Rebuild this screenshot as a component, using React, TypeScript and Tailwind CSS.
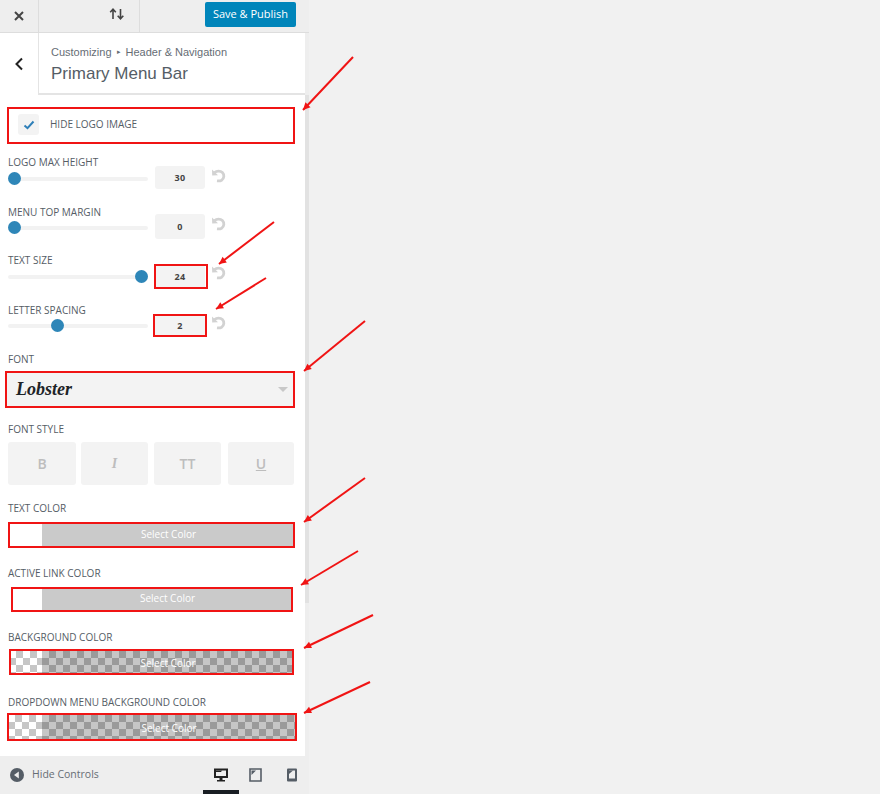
import React from "react";

const FONT = "font-['Open_Sans','Noto_Sans',sans-serif]";

function Label({ children, className = "" }: { children: React.ReactNode; className?: string }) {
  return <div className={`text-[10px] leading-[14px] uppercase text-[#555d66] ${className}`}>{children}</div>;
}

function Reset({ className }: { className: string }) {
  return (
    <svg width="15" height="15" viewBox="0 0 15 15" className={`ml-[6px] ${className}`} fill="none">
      <path d="M1 1.5 L1.2 7.6 L7 7.2 Z" fill="#d2d2d2" />
      <path d="M3.6 4.6 C5.6 2.8 9.4 2.6 11.4 4.6 C13.6 6.8 13.2 10.6 10.6 12.2 C9.2 13 7.6 13 6 12.8" stroke="#d2d2d2" strokeWidth="2.8" />
    </svg>
  );
}

function SliderRow({ label, value, pos, mt, rowMt, track, inputH, resetMt }: { label: string; value: string; pos: number; mt: string; rowMt: string; track: string; inputH: string; resetMt: string }) {
  return (
    <div className={`pl-2 ${mt}`}>
      <Label>{label}</Label>
      <div className={`flex items-start ${rowMt}`}>
        <div className={`relative w-[140px] h-[4px] ${track}`}>
          <div className="absolute left-0 right-0 top-0 h-[4px] rounded bg-[#f2f2f2]" />
          <div className="absolute top-[-5px] w-[13px] h-[13px] rounded-full bg-[#2e86b8]" style={{ left: pos }} />
        </div>
        <div className={`ml-[7px] w-[50px] ${inputH} rounded-[3px] bg-[#f3f3f3] flex items-center justify-center text-[9px] font-bold text-[#444] tracking-[0.4px]`}>
          {value}
        </div>
        <Reset className={resetMt} />
      </div>
    </div>
  );
}

function StyleBtn({ children, className }: { children: React.ReactNode; className: string }) {
  return <div className={`${className} h-[43px] rounded-[3px] bg-[#f3f3f3] flex items-center justify-center text-[14px] font-semibold text-[#bdbdbd]`}>{children}</div>;
}

const checker = {
  backgroundColor: "#c6c6c6",
  backgroundImage:
    "linear-gradient(45deg,#9a9a9a 25%,transparent 25%,transparent 75%,#9a9a9a 75%),linear-gradient(45deg,#9a9a9a 25%,transparent 25%,transparent 75%,#9a9a9a 75%)",
  backgroundSize: "14px 14px",
  backgroundPosition: "0 0,7px 7px",
};
const checkerLight = {
  backgroundColor: "#ffffff",
  backgroundImage:
    "linear-gradient(45deg,#c6c6c6 25%,transparent 25%,transparent 75%,#c6c6c6 75%),linear-gradient(45deg,#c6c6c6 25%,transparent 25%,transparent 75%,#c6c6c6 75%)",
  backgroundSize: "14px 14px",
  backgroundPosition: "0 0,7px 7px",
};

function ColorBtn({ transparent, className, swatch, text = "" }: { transparent?: boolean; className: string; swatch: string; text?: string }) {
  return (
    <div className={`flex ${className}`}>
      <div className={`${swatch} shrink-0 bg-white`} style={transparent ? checkerLight : undefined} />
      <div className={`flex-1 bg-[#cacaca] flex items-center justify-center text-[10px] text-white ${text}`} style={transparent ? checker : undefined}>
        Select Color
      </div>
    </div>
  );
}

function RedBox({ className }: { className: string }) {
  return <div className={`absolute border-2 border-[#f01414] pointer-events-none ${className}`} />;
}

const arrows: [number, number, number, number][] = [
  [353, 57, 303, 110],
  [274, 222, 219, 264],
  [266, 278, 216, 309],
  [365, 321, 304, 371],
  [365, 478, 304, 522],
  [358, 551, 301, 585],
  [373, 615, 304, 648],
  [370, 682, 304, 713],
];

function Arrows() {
  return (
    <svg className="absolute left-0 top-0 pointer-events-none" width="880" height="794">
      {arrows.map(([x1, y1, x2, y2], i) => {
        const a = Math.atan2(y2 - y1, x2 - x1);
        const L = 8;
        const p = (d: number) => `${x2 - L * Math.cos(a + d)},${y2 - L * Math.sin(a + d)}`;
        return (
          <g key={i}>
            <line x1={x1} y1={y1} x2={x2} y2={y2} stroke="#f01414" strokeWidth="2" />
            <polygon points={`${x2},${y2} ${p(0.45)} ${p(-0.45)}`} fill="#f01414" />
          </g>
        );
      })}
    </svg>
  );
}

export default function App() {
  return (
    <div className={`relative w-[880px] h-[794px] overflow-hidden bg-[#f1f1f1] ${FONT}`}>
      <div className="relative w-[309px] h-[794px] bg-[#eeeeee] flex flex-col">
        {/* top bar */}
        <div className="h-[33px] flex border-b border-[#dddddd] shrink-0">
          <div className="w-[39px] border-r border-[#dddddd] flex items-center justify-center">
            <svg width="12" height="12" viewBox="0 0 12 12" stroke="#444" strokeWidth="2"><path d="M2 2 L10 10 M10 2 L2 10" /></svg>
          </div>
          <div className="w-[101px] border-r border-[#dddddd] flex items-center justify-end pr-[14px] pb-[4px]">
            <svg width="16" height="12" viewBox="0 0 16 12" fill="none" stroke="#444" strokeWidth="1.6">
              <path d="M4 11 V1.5 M1.2 4.2 L4 1.2 L6.8 4.2" />
              <path d="M11.5 1 V10.5 M8.7 7.8 L11.5 10.8 L14.3 7.8" />
            </svg>
          </div>
          <div className="flex-1 flex justify-end pr-[13px] pt-[2px]">
            <div className="w-[91px] h-[25px] rounded-[2px] bg-[#0085ba] text-white text-[11px] font-medium flex items-center justify-center">Save &amp; Publish</div>
          </div>
        </div>

        {/* section header */}
        <div className="flex h-[62px] shrink-0 w-[305px] bg-white">
          <div className="w-[38px] flex items-center justify-center">
            <svg width="10" height="14" viewBox="0 0 10 14" fill="none" stroke="#222" strokeWidth="2"><path d="M8 1.5 L2.5 7 L8 12.5" /></svg>
          </div>
          <div className="flex-1 border-l border-b-2 border-[#e4e4e4] pl-[12px] pt-[11px] font-['Liberation_Sans',sans-serif]">
            <div className="text-[11px] leading-[16px] text-[#666d75] flex items-center">
              Customizing<span className="text-[7px] mx-[5px]">▸</span>Header &amp; Navigation
            </div>
            <div className="text-[17px] leading-[24px] text-[#555d66] mt-[2px]">Primary Menu Bar</div>
          </div>
        </div>

        {/* body */}
        <div className="flex-1 w-[305px] bg-white flex flex-col">
          <div className="flex items-center h-[29px] mt-[15px] pl-[18px] shrink-0">
            <div className="w-[21px] h-[21px] rounded-[3px] bg-[#f3f3f3] flex items-center justify-center">
              <svg width="12" height="10" viewBox="0 0 12 10" fill="none" stroke="#2e7fb8" strokeWidth="2"><path d="M1.5 5.5 L4.5 8.2 L10.5 1.5" /></svg>
            </div>
            <span className="ml-[11px] text-[10px] font-medium uppercase text-[#555d66]">Hide logo image</span>
          </div>

          <SliderRow label="Logo max height" value="30" pos={0} mt="mt-[16px]" rowMt="-mt-[3px]" track="mt-[11px]" inputH="h-[23px]" resetMt="mt-[2px]" />
          <SliderRow label="Menu top margin" value="0" pos={0} mt="mt-[16px]" rowMt="-mt-[5px]" track="mt-[12px]" inputH="h-[25px]" resetMt="mt-[2px]" />
          <SliderRow label="Text size" value="24" pos={127} mt="mt-[14px]" rowMt="-mt-[2px]" track="mt-[10px]" inputH="h-[24px]" resetMt="mt-0" />
          <SliderRow label="Letter spacing" value="2" pos={43} mt="mt-[14px]" rowMt="-mt-[2px]" track="mt-[9px]" inputH="h-[22px]" resetMt="mt-0" />

          <div className="mt-[15px]">
            <Label className="pl-2">Font</Label>
            <div className="mt-[6px] ml-[6px] w-[288px] h-[35px] bg-[#f3f3f3] flex items-center pl-[10px] pr-[6px]">
              <span className="text-[18px] italic font-bold text-[#1d2327] font-['Liberation_Serif',serif] flex-1">Lobster</span>
              <div className="w-0 h-0 border-x-[5px] border-x-transparent border-t-[5px] border-t-[#c8c8c8]" />
            </div>
          </div>

          <div className="pl-2 mt-[15px]">
            <Label>Font style</Label>
            <div className="flex mt-[6px]">
              <StyleBtn className="w-[68px]">B</StyleBtn>
              <StyleBtn className="w-[67px] ml-[5px]"><span className="italic font-['Liberation_Serif',serif] font-bold">I</span></StyleBtn>
              <StyleBtn className="w-[67px] ml-[6px]">TT</StyleBtn>
              <StyleBtn className="w-[66px] ml-[7px]"><span className="underline">U</span></StyleBtn>
            </div>
          </div>

          <div className="pl-2 mt-[16px]">
            <Label>Text color</Label>
            <ColorBtn swatch="w-[34px]" text="pb-[2px]" className="mt-[8px] h-[24px] w-[287px]" />
          </div>
          <div className="pl-2 mt-[19px]">
            <Label>Active link color</Label>
            <ColorBtn swatch="w-[30px]" text="pb-[3px]" className="mt-[8px] h-[24px] w-[281px] ml-[4px]" />
          </div>
          <div className="pl-2 mt-[18px]">
            <Label>Background color</Label>
            <ColorBtn transparent swatch="w-[33px]" className="mt-[7px] h-[24px] ml-[1px] w-[285px]" />
          </div>
          <div className="pl-2 mt-[20px]">
            <Label>Dropdown menu background color</Label>
            <ColorBtn transparent swatch="w-[34px]" text="pt-[1px]" className="mt-[6px] h-[25px] w-[288px]" />
          </div>
        </div>

        {/* footer */}
        <div className="h-[38px] shrink-0 flex items-center pl-[10px] relative">
          <svg width="14" height="14" viewBox="0 0 14 14"><circle cx="7" cy="7" r="7" fill="#555d66" /><path d="M8.8 3.6 V10.4 L4 7 Z" fill="#eeeeee" /></svg>
          <span className="ml-[8px] text-[10.5px] text-[#666d75]">Hide Controls</span>
          <div className="ml-auto flex mr-[12px] items-center">
            <svg width="14" height="14" viewBox="0 0 14 14"><path fillRule="evenodd" d="M0 0.5 H14 V10 H8.5 V12 H11 V13.5 H3 V12 H5.5 V10 H0 Z M2 2.5 V8 H12 V2.5 Z" fill="#222" /><path d="M2 2.5 H8 L7 4 H2 Z" fill="#222" /></svg>
            <svg width="13" height="14" viewBox="0 0 13 14" className="ml-[21px]"><path d="M1 1 H12 V13 H1 Z" fill="none" stroke="#555d66" strokeWidth="1.6" /><path d="M2.5 2.5 H7 L2.5 7 Z" fill="#555d66" /></svg>
            <svg width="10" height="14" viewBox="0 0 10 14" className="ml-[25px]"><rect x="0" y="0.5" width="10" height="13" rx="1" fill="#555d66" /><path d="M2 2.5 H8 V10.5 H2 Z" fill="#eeeeee" /><path d="M2 2.5 H6 L2 6 Z" fill="#555d66" /></svg>
          </div>
          <div className="absolute left-[203px] bottom-0 w-[36px] h-[4px] bg-[#191e23]" />
        </div>

        {/* scrollbar thumb */}
        <div className="absolute left-[305px] top-[95px] w-[4px] h-[508px] bg-[#e2e2e2]" />
      </div>

      <RedBox className="left-[7px] top-[107px] w-[288px] h-[37px]" />
      <RedBox className="left-[154px] top-[264px] w-[54px] h-[25px]" />
      <RedBox className="left-[153px] top-[314px] w-[54px] h-[23px]" />
      <RedBox className="left-[5px] top-[371px] w-[290px] h-[37px]" />
      <RedBox className="left-[8px] top-[522px] w-[287px] h-[26px]" />
      <RedBox className="left-[11px] top-[587px] w-[282px] h-[25px]" />
      <RedBox className="left-[9px] top-[649px] w-[285px] h-[26px]" />
      <RedBox className="left-[7px] top-[713px] w-[290px] h-[28px]" />
      <Arrows />
    </div>
  );
}
